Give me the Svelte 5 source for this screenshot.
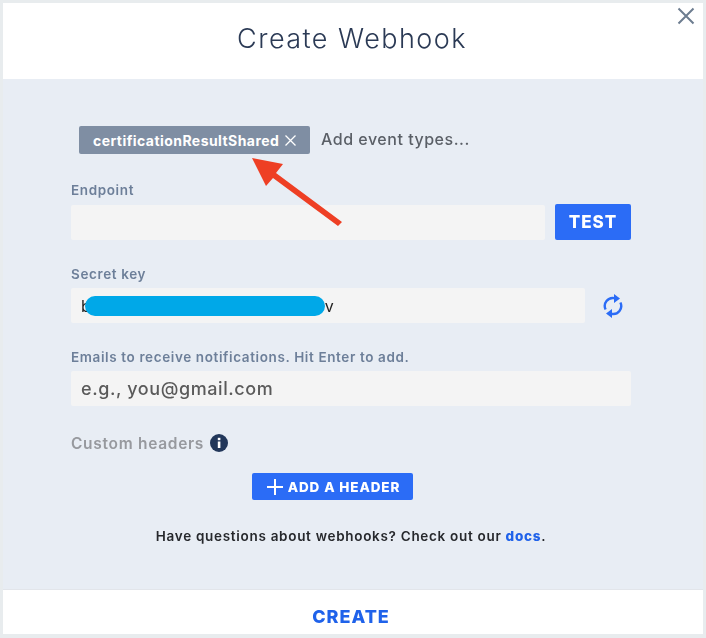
<script lang="ts">
  let endpoint = $state("");
  let email = $state("");
</script>

<div class="page">
  <div class="modal">
    <header class="head">
      <h1>Create Webhook</h1>
      <button class="close" type="button" aria-label="Close">
        <svg width="20" height="20" viewBox="0 0 20 20"><path d="M2.5 2.5 L17.5 17.5 M17.5 2.5 L2.5 17.5" /></svg>
      </button>
    </header>

    <div class="body">
      <div class="events">
        <span class="tag">
          certificationResultShared
          <svg width="13" height="13" viewBox="0 0 13 13"><path d="M1.5 1.5 L11.5 11.5 M11.5 1.5 L1.5 11.5" /></svg>
        </span>
        <span class="add-events">Add event types...</span>
      </div>

      <!-- red annotation arrow -->
      <svg class="arrow" width="100" height="80" viewBox="0 0 100 80">
        <path d="M0 3 L31 9 L24 18 L90 67 L86 71 L21 23 L14 31 Z" />
      </svg>

      <label class="label endpoint-label" for="endpoint">Endpoint</label>
      <div class="row">
        <input id="endpoint" class="field grow" bind:value={endpoint} />
        <button class="btn test" type="button">TEST</button>
      </div>

      <label class="label" for="secret">Secret key</label>
      <div class="row">
        <div class="secret-wrap">
          <input id="secret" class="field secret" value="b                                                    v" readonly />
          <span class="redact"></span>
        </div>
        <svg class="refresh" width="20" height="24" viewBox="0 0 20 24">
          <path class="stroke" d="M2.6 15.5 A8 8 0 0 1 11.5 4.2 M17.4 8.5 A8 8 0 0 1 8.5 19.8" />
          <path class="fill" d="M11 0 L17 4.5 L11 9 Z M9 15 L3 19.5 L9 24 Z" />
        </svg>
      </div>

      <label class="label" for="emails">Emails to receive notifications. Hit Enter to add.</label>
      <input id="emails" class="field email" placeholder="e.g., you@gmail.com" bind:value={email} />

      <div class="custom">
        <span>Custom headers</span>
        <svg width="18" height="18" viewBox="0 0 18 18">
          <circle cx="9" cy="9" r="9" fill="#22375a" />
          <rect x="7.8" y="7.5" width="2.6" height="6.5" fill="#fff" />
          <rect x="7.8" y="3.8" width="2.6" height="2.4" fill="#fff" />
        </svg>
      </div>

      <button class="btn add" type="button">
        <svg width="20" height="20" viewBox="0 0 20 20"><path d="M10 2 V18 M2 10 H18" /></svg>
        ADD A HEADER
      </button>

      <p class="help">Have questions about webhooks? Check out our <a href="#docs">docs</a>.</p>
    </div>

    <footer class="foot">
      <button class="create" type="button">CREATE</button>
    </footer>
  </div>
</div>

<style>
  :global(body) {
    margin: 0;
    background: #e8ecee;
  }

  .page {
    width: 706px;
    height: 638px;
    padding: 3px;
    box-sizing: border-box;
    font-family: "Inter", "Liberation Sans", sans-serif;
  }

  .modal {
    width: 700px;
    height: 631px;
    display: flex;
    flex-direction: column;
    position: relative;
    filter: blur(0.35px);
  }

  .head {
    height: 76px;
    flex: none;
    background: #fff;
    display: flex;
    align-items: center;
    justify-content: center;
  }

  h1 {
    margin: 0;
    font-size: 27px;
    font-weight: 300;
    letter-spacing: 1.45px;
    color: #2b3a55;
    padding: 0 2px 5px 0;
  }

  .close {
    position: absolute;
    top: 3px;
    right: 7px;
    padding: 0;
    border: none;
    background: none;
    line-height: 0;
  }

  .close path {
    stroke: #6d7d90;
    stroke-width: 2;
    fill: none;
  }

  .body {
    flex: 1;
    background: #e8edf4;
    padding: 47px 72px 0 68px;
    position: relative;
    border-bottom: 1px solid #e2e5ea;
  }

  .events {
    display: flex;
    align-items: center;
    padding-left: 8px;
    gap: 11px;
  }

  .tag {
    height: 28px;
    width: 231px;
    box-sizing: border-box;
    background: #7f8ea3;
    border-radius: 2px;
    color: #fff;
    font-size: 14px;
    font-weight: 700;
    letter-spacing: 0.44px;
    display: flex;
    align-items: center;
    justify-content: space-between;
    padding: 0 13px 0 14px;
  }

  .tag path {
    stroke: #fff;
    stroke-width: 1.3;
    fill: none;
  }

  .add-events {
    color: #5a5f66;
    font-size: 16px;
    font-weight: 500;
    letter-spacing: 0.52px;
    margin-top: -2px;
  }

  .arrow {
    position: absolute;
    left: 249px;
    top: 76px;
  }

  .arrow path {
    fill: #ee3f24;
  }

  .label {
    display: block;
    font-size: 13.5px;
    line-height: 17px;
    font-weight: 600;
    letter-spacing: 0.62px;
    color: #6d7f99;
    margin: 26px 0 5px;
  }

  .endpoint-label {
    margin-top: 28px;
  }

  .row {
    display: flex;
    align-items: center;
  }

  .field {
    display: block;
    box-sizing: border-box;
    height: 35px;
    background: #f4f4f4;
    border: none;
    border-radius: 2px;
    padding: 0 10px;
    font-family: inherit;
    outline: none;
  }

  .grow {
    width: 474px;
  }

  .btn {
    background: #2b6cf6;
    color: #fff;
    border: none;
    border-radius: 2px;
    font-family: inherit;
    font-weight: 800;
    padding: 0;
  }

  .test {
    width: 76px;
    height: 36px;
    margin-left: 10px;
    font-size: 17px;
    letter-spacing: 1px;
  }

  .secret-wrap {
    position: relative;
    width: 514px;
  }

  .secret {
    width: 100%;
    font-size: 16px;
    color: #222;
  }

  .redact {
    position: absolute;
    left: 14px;
    top: 8px;
    width: 240px;
    height: 20px;
    border-radius: 10px;
    background: #00a8e8;
  }

  .refresh {
    margin-left: 18px;
  }

  .refresh .stroke {
    stroke: #2b6cf6;
    stroke-width: 2.4;
    fill: none;
  }

  .refresh .fill {
    fill: #2b6cf6;
  }

  .email {
    width: 560px;
    font-size: 18px;
    font-weight: 500;
    letter-spacing: 0.58px;
  }

  .email::placeholder {
    color: #5a5a5a;
    opacity: 1;
  }

  .custom {
    margin-top: 27px;
    display: flex;
    align-items: center;
    gap: 6px;
    height: 20px;
    font-size: 15.5px;
    font-weight: 600;
    letter-spacing: 0.7px;
    color: #97999e;
  }

  .add {
    display: flex;
    align-items: center;
    justify-content: center;
    gap: 3px;
    width: 161px;
    height: 27px;
    margin: 20px 0 0 181px;
    font-size: 13.5px;
    letter-spacing: 0.9px;
  }

  .add path {
    stroke: #fff;
    stroke-width: 2;
    fill: none;
  }

  .help {
    margin: 28px 0 0;
    text-align: center;
    font-size: 13.5px;
    font-weight: 600;
    letter-spacing: 0.7px;
    color: #26282c;
  }

  .help a {
    color: #1f62ea;
    text-decoration: none;
    font-weight: 800;
  }

  .foot {
    height: 44px;
    flex: none;
    background: #fff;
    display: flex;
    align-items: center;
    justify-content: center;
    padding: 8px 4px 0 0;
    box-sizing: border-box;
  }

  .create {
    border: none;
    background: none;
    padding: 0;
    color: #1f62ea;
    font-family: inherit;
    font-size: 18px;
    font-weight: 800;
    letter-spacing: 1px;
  }
</style>
